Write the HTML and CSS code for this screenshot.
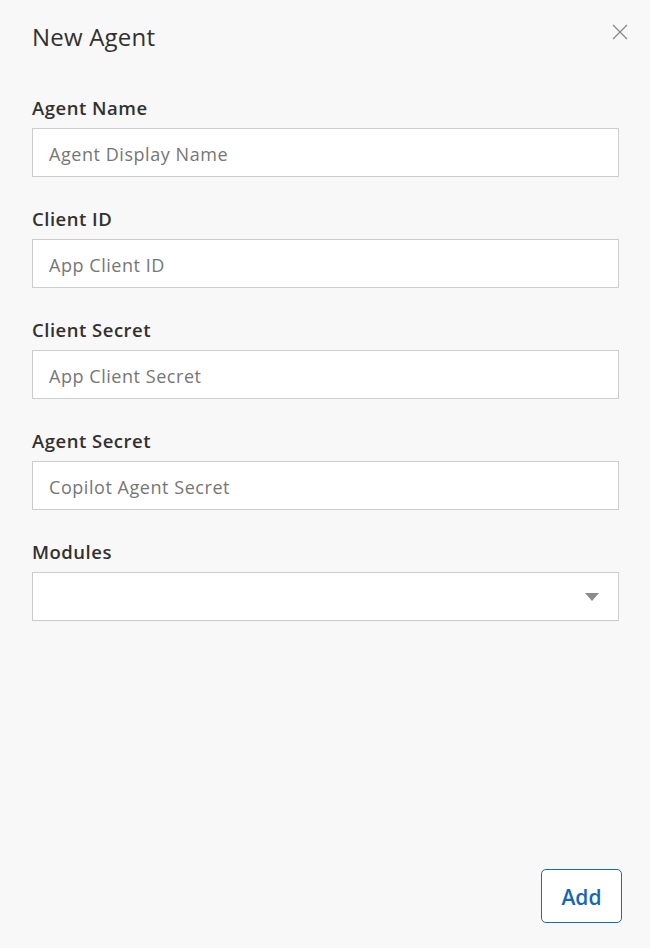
FILE: index.html
```html
<!DOCTYPE html>
<html lang="en">
<head>
<meta charset="utf-8">
<title>New Agent</title>
<link rel="stylesheet" href="styles.css">
</head>
<body>
<div class="panel">
  <header class="panel-header">
    <h1 class="panel-title">New Agent</h1>
    <button class="close-btn" type="button" aria-label="Close">
      <svg width="16" height="16" viewBox="0 0 16 16"><path d="M1 1 L15 15 M15 1 L1 15" stroke="#8a8a8a" stroke-width="1.3" fill="none"/></svg>
    </button>
  </header>
  <form class="form">
    <label class="field">
      <span class="field-label">Agent Name</span>
      <input class="field-input" type="text" placeholder="Agent Display Name">
    </label>
    <label class="field">
      <span class="field-label">Client ID</span>
      <input class="field-input" type="text" placeholder="App Client ID">
    </label>
    <label class="field">
      <span class="field-label">Client Secret</span>
      <input class="field-input" type="text" placeholder="App Client Secret">
    </label>
    <label class="field">
      <span class="field-label">Agent Secret</span>
      <input class="field-input" type="text" placeholder="Copilot Agent Secret">
    </label>
    <div class="field">
      <span class="field-label">Modules</span>
      <div class="select">
        <svg class="select-caret" width="14" height="8" viewBox="0 0 14 8"><path d="M0 0 H14 L7 8 Z" fill="#8c8c8c"/></svg>
      </div>
    </div>
  </form>
  <footer class="panel-footer">
    <button class="add-btn" type="button">Add</button>
  </footer>
</div>
</body>
</html>
```
FILE: styles.css
```css
* { box-sizing: border-box; }

html, body {
  margin: 0;
  padding: 0;
  background: #f8f8f8;
}

body {
  font-family: "Open Sans", "Noto Sans", sans-serif;
  color: #323130;
}

.panel {
  min-height: 948px;
  display: flex;
  flex-direction: column;
  padding: 0 31px 25px 32px;
}

.panel-header {
  display: flex;
  align-items: flex-start;
  justify-content: space-between;
  padding-top: 21px;
  height: 96px;
}

.panel-title {
  margin: 0;
  font-size: 24px;
  font-weight: 400;
  line-height: 32px;
  color: #323130;
  letter-spacing: 0.2px;
}

.close-btn {
  border: 0;
  background: none;
  padding: 0;
  margin: 2px -10px 0 0;
  width: 18px;
  height: 18px;
  display: flex;
  align-items: center;
  justify-content: center;
  cursor: pointer;
}

.form {
  display: flex;
  flex-direction: column;
  gap: 30px;
}

.field {
  display: flex;
  flex-direction: column;
  gap: 8px;
}

.field-label {
  font-size: 18.5px;
  font-weight: 600;
  line-height: 24px;
  color: #323130;
  letter-spacing: 0.5px;
}

.field-input,
.select {
  width: 100%;
  height: 49px;
  border: 1px solid #cccccc;
  background: #ffffff;
  font-family: inherit;
  font-size: 18px;
  padding: 3px 16px 0;
  color: #323130;
  outline: none;
}

.field-input::placeholder {
  color: #767676;
  letter-spacing: 0.55px;
}

.select {
  display: flex;
  align-items: center;
  justify-content: flex-end;
  padding: 0 19px 0 16px;
}

.panel-footer {
  margin-top: auto;
  display: flex;
  justify-content: flex-end;
  margin-right: -3px;
}

.add-btn {
  width: 81px;
  height: 54px;
  border: 1px solid #1a6bb3;
  border-radius: 5px;
  background: #ffffff;
  color: #1566b7;
  font-family: inherit;
  font-size: 21px;
  font-weight: 600;
  padding: 2px 0 0;
  cursor: pointer;
}
```
